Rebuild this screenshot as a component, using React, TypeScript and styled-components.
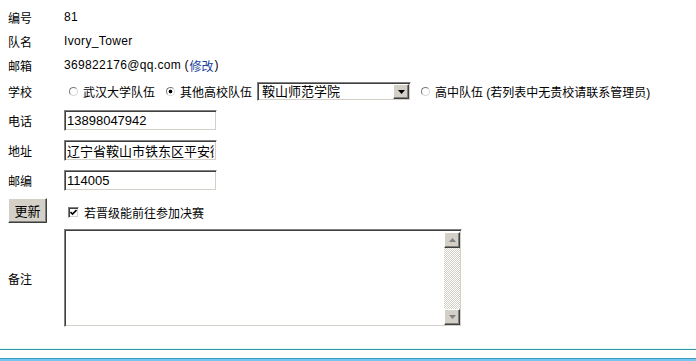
import React from 'react';
import styled, { createGlobalStyle, css } from 'styled-components';

const GlobalStyle = createGlobalStyle`
  html, body {
    margin: 0;
    padding: 0;
    background: #fff;
  }
  body {
    font-family: 'Liberation Sans', Tahoma, 'Noto Sans CJK SC', sans-serif;
    font-size: 12px;
    color: #000;
  }
`;

const sunken = css`
  box-sizing: border-box;
  border: 1px solid;
  border-color: #808080 #fff #fff #808080;
  box-shadow: inset 1px 1px 0 #404040, inset -1px -1px 0 #d4d0c8;
  background: #fff;
`;

const raised = css`
  box-sizing: border-box;
  background: #d4d0c8;
  border: 1px solid;
  border-color: #fff #404040 #404040 #fff;
  box-shadow: inset -1px -1px 0 #808080, inset 1px 1px 0 #d4d0c8;
`;

const Page = styled.div`
  padding-top: 5px;
`;

const Form = styled.div`
  padding-left: 8px;
`;

const Row = styled.div<{ $h?: number; $pad?: number }>`
  display: grid;
  grid-template-columns: 56px auto;
  align-items: center;
  height: ${p => (p.$h ? `${p.$h}px` : 'auto')};
  padding: ${p => p.$pad || 0}px 0;
`;

const Label = styled.div`
  white-space: nowrap;
`;

const Value = styled.div`
  display: flex;
  align-items: center;
  white-space: nowrap;
`;

const Latin = styled.span`
  letter-spacing: 0.35px;
`;

const Link = styled.a`
  color: #1a3f9e;
  text-decoration: none;
  margin: 0 1px;
`;

const Choice = styled.label<{ $gap?: number }>`
  display: inline-flex;
  align-items: center;
  gap: 5px;
  margin-left: ${p => p.$gap || 0}px;
`;

const Radio = styled.span<{ $checked?: boolean }>`
  display: inline-block;
  width: 9px;
  height: 9px;
  box-sizing: border-box;
  border-radius: 50%;
  border: 1px solid;
  border-color: #7a7a7a #d8d8d8 #d8d8d8 #7a7a7a;
  background: ${p =>
    p.$checked ? 'radial-gradient(circle, #000 0 1.6px, #fff 2.2px)' : '#fff'};
`;

const SelectBox = styled.div`
  ${sunken};
  display: inline-flex;
  align-items: stretch;
  width: 154px;
  height: 19px;
  margin-left: 5px;
  padding: 1px;
`;

const SelectText = styled.div`
  flex: 1;
  font-size: 13px;
  line-height: 15px;
  padding-left: 3px;
`;

const DropButton = styled.div`
  ${raised};
  width: 16px;
  display: flex;
  align-items: center;
  justify-content: center;
`;

const TextInput = styled.input`
  ${sunken};
  width: 153px;
  height: 21px;
  padding: 0 2px;
  font-family: 'Liberation Sans', Arial, 'Noto Sans CJK SC', sans-serif;
  font-size: 13px;
  color: #000;
  outline: none;
`;

const Button = styled.button`
  ${raised};
  width: 39px;
  height: 25px;
  padding: 0;
  font-family: 'Liberation Sans', 'Noto Sans CJK SC', sans-serif;
  font-size: 13px;
  color: #000;
`;

const Check = styled.span`
  ${sunken};
  display: inline-flex;
  align-items: center;
  justify-content: center;
  width: 11px;
  height: 11px;
`;

const CheckLabel = styled.label`
  display: inline-flex;
  align-items: center;
  gap: 5px;
  margin-left: 4px;
  margin-top: 3px;
`;

const MemoBox = styled.div`
  ${sunken};
  display: flex;
  width: 398px;
  height: 98px;
  padding: 2px 1px 1px 2px;
`;

const Memo = styled.textarea`
  flex: 1;
  border: none;
  outline: none;
  resize: none;
  padding: 2px;
  font-family: 'Liberation Sans', 'Noto Sans CJK SC', sans-serif;
  font-size: 13px;
`;

const ScrollBar = styled.div`
  width: 16px;
  display: flex;
  flex-direction: column;
`;

const ScrollButton = styled.div`
  ${raised};
  height: 16px;
  display: flex;
  align-items: center;
  justify-content: center;
`;

const Track = styled.div`
  flex: 1;
  background: repeating-conic-gradient(#d4d0c8 0 25%, #fff 0 50%) 0 0 / 2px 2px;
`;

const Footer = styled.div`
  margin-top: 19px;
`;

const RuleTop = styled.div`
  height: 1px;
  background: #3d96a8;
  box-shadow: 0 -1px 0 #dcfbfb;
`;

const RuleBottom = styled.div`
  margin-top: 8px;
  height: 4px;
  border-top: 1px solid #3c9cc2;
  background: #72c6f1;
`;

const Arrow = ({ dir, color }: { dir: 'up' | 'down'; color: string }) => (
  <svg width="7" height="4" viewBox="0 0 7 4">
    <polygon points={dir === 'up' ? '0,4 7,4 3.5,0' : '0,0 7,0 3.5,4'} fill={color} />
  </svg>
);

export default function App() {
  return (
    <>
      <GlobalStyle />
      <Page>
        <Form>
          <Row $h={24}>
            <Label>编号</Label>
            <Value>
              <Latin>81</Latin>
            </Value>
          </Row>
          <Row $h={24}>
            <Label>队名</Label>
            <Value>
              <Latin>Ivory_Tower</Latin>
            </Value>
          </Row>
          <Row $h={24}>
            <Label>邮箱</Label>
            <Value>
              <Latin>369822176@qq.com</Latin>&nbsp;(<Link href="#">修改</Link>)
            </Value>
          </Row>
          <Row $h={29}>
            <Label>学校</Label>
            <Value>
              <Choice $gap={5}>
                <Radio />
                武汉大学队伍
              </Choice>
              <Choice $gap={11}>
                <Radio $checked />
                其他高校队伍
              </Choice>
              <SelectBox>
                <SelectText>鞍山师范学院</SelectText>
                <DropButton>
                  <Arrow dir="down" color="#000" />
                </DropButton>
              </SelectBox>
              <Choice $gap={10}>
                <Radio />
                高中队伍 (若列表中无贵校请联系管理员)
              </Choice>
            </Value>
          </Row>
          <Row $h={29}>
            <Label>电话</Label>
            <Value>
              <TextInput defaultValue="13898047942" />
            </Value>
          </Row>
          <Row $h={30}>
            <Label>地址</Label>
            <Value>
              <TextInput defaultValue="辽宁省鞍山市铁东区平安街" />
            </Value>
          </Row>
          <Row $h={30}>
            <Label>邮编</Label>
            <Value>
              <TextInput defaultValue="114005" />
            </Value>
          </Row>
          <Row $h={31}>
            <Label>
              <Button>更新</Button>
            </Label>
            <Value>
              <CheckLabel>
                <Check>
                  <svg width="7" height="7" viewBox="0 0 7 7">
                    <polyline points="0.5,3 2.5,5 6.5,1" fill="none" stroke="#000" strokeWidth="1.6" />
                  </svg>
                </Check>
                若晋级能前往参加决赛
              </CheckLabel>
            </Value>
          </Row>
          <Row $pad={3}>
            <Label>备注</Label>
            <Value>
              <MemoBox>
                <Memo />
                <ScrollBar>
                  <ScrollButton>
                    <Arrow dir="up" color="#808080" />
                  </ScrollButton>
                  <Track />
                  <ScrollButton>
                    <Arrow dir="down" color="#808080" />
                  </ScrollButton>
                </ScrollBar>
              </MemoBox>
            </Value>
          </Row>
        </Form>
        <Footer>
          <RuleTop />
          <RuleBottom />
        </Footer>
      </Page>
    </>
  );
}
